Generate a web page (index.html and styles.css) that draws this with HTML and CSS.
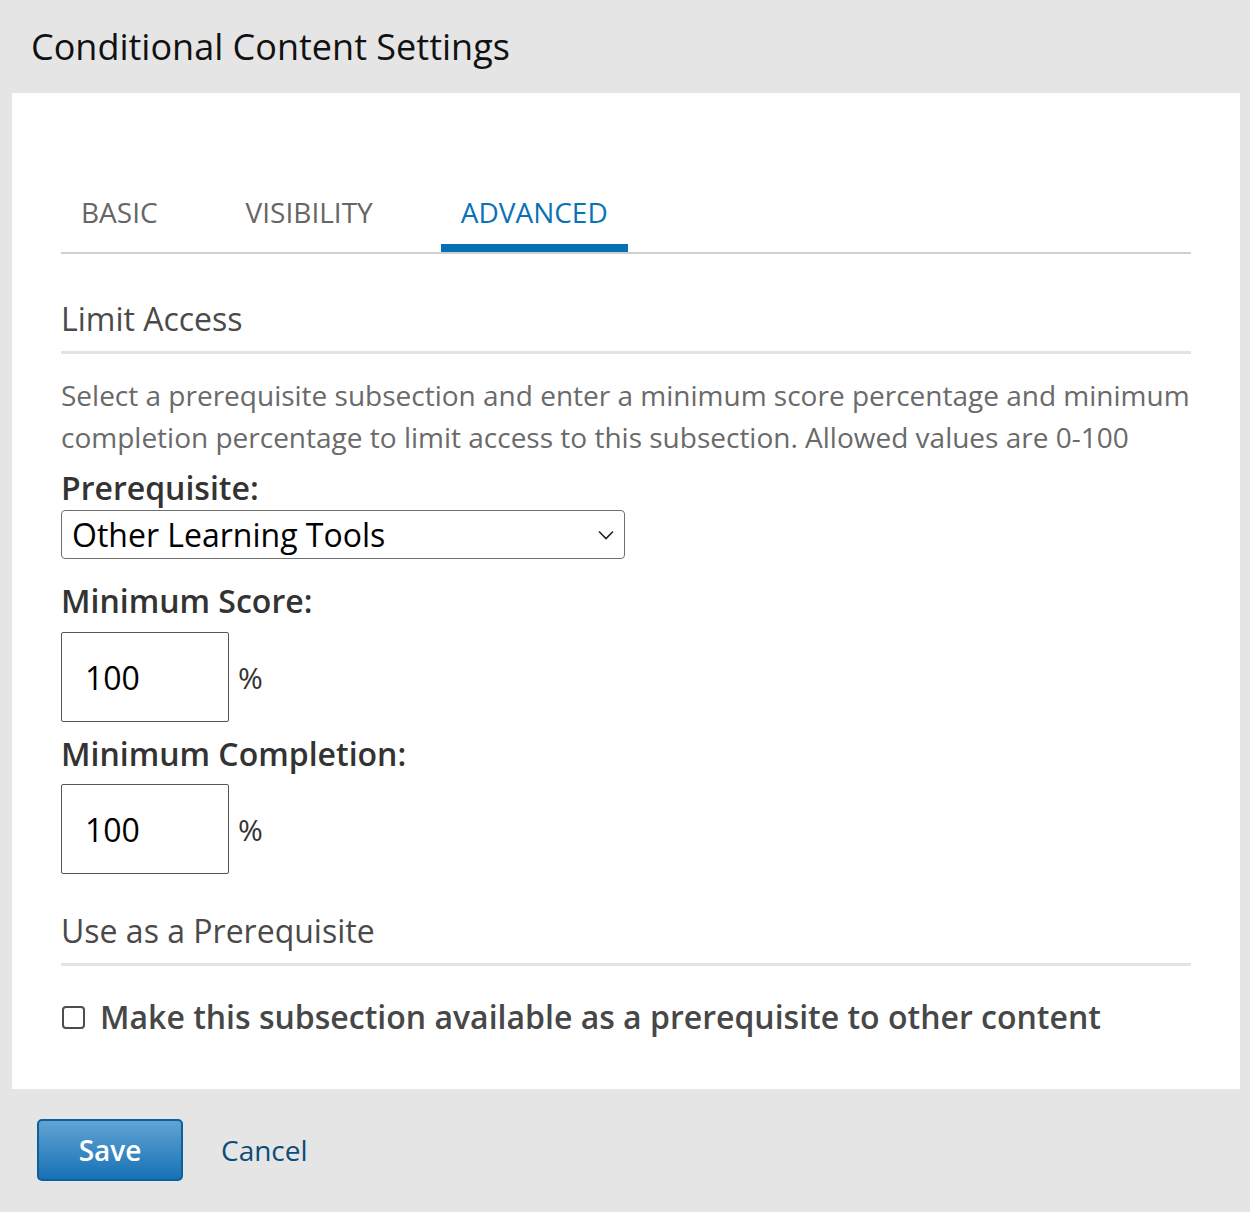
FILE: index.html
```html
<!DOCTYPE html>
<html lang="en">
<head>
<meta charset="utf-8">
<title>Conditional Content Settings</title>
<link rel="stylesheet" href="styles.css">
</head>
<body>
<header class="page-header">
  <h1 class="page-title">Conditional Content Settings</h1>
</header>
<main class="panel">
  <nav class="tabs">
    <a class="tab">BASIC</a>
    <a class="tab">VISIBILITY</a>
    <a class="tab tab-active">ADVANCED</a>
  </nav>

  <section class="section">
    <h2 class="section-title">Limit Access</h2>
    <p class="description">Select a prerequisite subsection and enter a minimum score percentage and minimum completion percentage to limit access to this subsection. Allowed values are 0-100</p>

    <label class="field-label">Prerequisite:</label>
    <div class="select">
      <span class="select-value">Other Learning Tools</span>
      <svg class="select-chevron" width="16" height="10" viewBox="0 0 16 10"><path d="M1 1.5 L8 8.5 L15 1.5" fill="none" stroke="#222" stroke-width="1.6"/></svg>
    </div>

    <label class="field-label field-label-score">Minimum Score:</label>
    <div class="number-row">
      <div class="number-input">100</div>
      <span class="unit">%</span>
    </div>

    <label class="field-label field-label-completion">Minimum Completion:</label>
    <div class="number-row number-row-tight">
      <div class="number-input">100</div>
      <span class="unit">%</span>
    </div>
  </section>

  <section class="section section-second">
    <h2 class="section-title">Use as a Prerequisite</h2>
    <label class="checkbox-row">
      <span class="checkbox"></span>
      <span class="checkbox-label">Make this subsection available as a prerequisite to other content</span>
    </label>
  </section>
</main>
<footer class="actions">
  <button class="btn-save">Save</button>
  <a class="btn-cancel">Cancel</a>
</footer>
</body>
</html>
```
FILE: styles.css
```css
* { box-sizing: border-box; }
html, body { margin: 0; padding: 0; }
body {
  background: #e5e5e5;
  font-family: "Open Sans", "Liberation Sans", sans-serif;
  color: #333;
}
.page-header {
  height: 93px;
  padding: 22px 0 0 31px;
}
.page-title {
  margin: 0;
  font-size: 36px;
  line-height: 49px;
  font-weight: 400;
  color: #111;
}
.panel {
  background: #fff;
  margin: 0 10px 0 12px;
  padding: 100px 49px 50px 49px;
}
.tabs {
  display: flex;
  gap: 48px;
  border-bottom: 2px solid #cfcfcf;
}
.tab {
  display: block;
  padding: 0 20px 13px;
  font-size: 28px;
  line-height: 38px;
  color: #666;
  border-bottom: 8px solid transparent;
}
.tab-active {
  color: #0a72b6;
  border-bottom-color: #0571b5;
}
.section { margin-top: 43px; }
.section-second { margin-top: 35px; }
.section-title {
  margin: 0;
  font-size: 32px;
  line-height: 44px;
  font-weight: 400;
  color: #4a4a4a;
  padding-bottom: 10px;
  border-bottom: 3px solid #e3e3e3;
}
.description {
  margin: 20px 0 0;
  font-size: 28px;
  line-height: 42px;
  color: #6a6a6a;
}
.field-label {
  display: block;
  margin-top: 8px;
  font-size: 32px;
  line-height: 44px;
  font-weight: 600;
  color: #333;
}
.field-label-score { margin-top: 20px; }
.field-label-completion { margin-top: 10px; }
.select {
  width: 564px;
  height: 49px;
  border: 1px solid #6f6f6f;
  border-radius: 4px;
  display: flex;
  align-items: center;
  justify-content: space-between;
  padding: 0 10px 0 10px;
  font-size: 32px;
  color: #000;
}
.number-row {
  display: flex;
  align-items: center;
  gap: 9px;
  margin-top: 9px;
}
.number-row-tight { margin-top: 8px; }
.number-input {
  width: 168px;
  height: 90px;
  border: 1px solid #555;
  border-radius: 2px;
  display: flex;
  align-items: center;
  padding-left: 23px;
  font-size: 32px;
  color: #000;
}
.unit {
  font-size: 30px;
  color: #333;
}
.checkbox-row {
  display: flex;
  align-items: center;
  gap: 15px;
  margin-top: 29px;
}
.checkbox {
  width: 23px;
  height: 23px;
  border: 2px solid #4d4d4d;
  border-radius: 4px;
  margin-left: 1px;
}
.checkbox-label {
  font-size: 32px;
  line-height: 44px;
  font-weight: 600;
  color: #474747;
}
.actions {
  display: flex;
  align-items: center;
  gap: 38px;
  padding: 30px 0 0 37px;
}
.btn-save {
  width: 146px;
  height: 62px;
  border: 2px solid #0d609d;
  border-radius: 5px;
  background: linear-gradient(#62a3d3, #1672b5);
  color: #fff;
  font-family: "Open Sans", "Liberation Sans", sans-serif;
  font-size: 28px;
  font-weight: 600;
  padding: 0;
}
.btn-cancel {
  font-size: 28px;
  color: #0d4d78;
}
```
